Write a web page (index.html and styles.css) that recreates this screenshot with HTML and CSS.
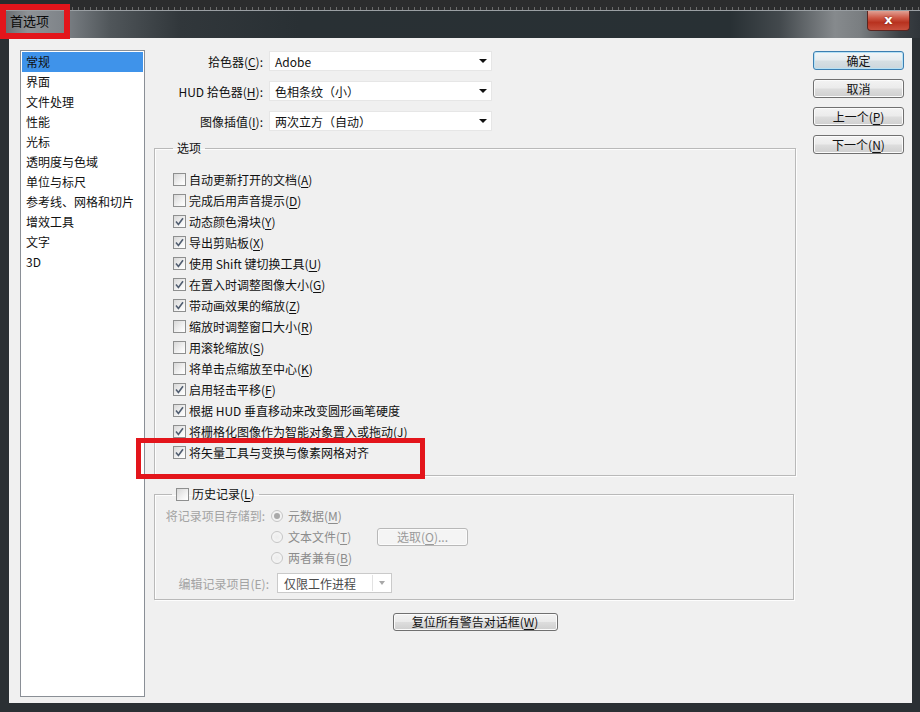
FILE: index.html
```html
<!DOCTYPE html>
<html lang="zh-CN">
<head>
<meta charset="utf-8">
<title>首选项</title>
<link rel="stylesheet" href="styles.css">
</head>
<body>
<div class="ruler"></div>
<div class="window">
  <div class="titlebar">
    <span class="title">首选项</span>
    <span class="close">x</span>
  </div>
  <div class="client">
    <ul class="catlist">
      <li class="sel">常规</li>
      <li>界面</li>
      <li>文件处理</li>
      <li>性能</li>
      <li>光标</li>
      <li>透明度与色域</li>
      <li>单位与标尺</li>
      <li>参考线、网格和切片</li>
      <li>增效工具</li>
      <li>文字</li>
      <li>3D</li>
    </ul>
    <div class="main">
      <div class="field"><label>拾色器(<u>C</u>):</label><div class="select"><span>Adobe</span><i class="arr"></i></div></div>
      <div class="field"><label>HUD 拾色器(<u>H</u>):</label><div class="select"><span>色相条纹（小）</span><i class="arr"></i></div></div>
      <div class="field last"><label>图像插值(<u>I</u>):</label><div class="select"><span>两次立方（自动）</span><i class="arr"></i></div></div>

      <fieldset class="group opts">
        <legend>选项</legend>
        <div class="checks">
          <div class="chk"><span class="box"></span>自动更新打开的文档(<u>A</u>)</div>
          <div class="chk"><span class="box"></span>完成后用声音提示(<u>D</u>)</div>
          <div class="chk"><span class="box on"><svg viewBox="0 0 11 11"><path d="M2 5.6 L4.4 8.4 L9 2.2"/></svg></span>动态颜色滑块(<u>Y</u>)</div>
          <div class="chk"><span class="box on"><svg viewBox="0 0 11 11"><path d="M2 5.6 L4.4 8.4 L9 2.2"/></svg></span>导出剪贴板(<u>X</u>)</div>
          <div class="chk"><span class="box on"><svg viewBox="0 0 11 11"><path d="M2 5.6 L4.4 8.4 L9 2.2"/></svg></span>使用 Shift 键切换工具(<u>U</u>)</div>
          <div class="chk"><span class="box on"><svg viewBox="0 0 11 11"><path d="M2 5.6 L4.4 8.4 L9 2.2"/></svg></span>在置入时调整图像大小(<u>G</u>)</div>
          <div class="chk"><span class="box on"><svg viewBox="0 0 11 11"><path d="M2 5.6 L4.4 8.4 L9 2.2"/></svg></span>带动画效果的缩放(<u>Z</u>)</div>
          <div class="chk"><span class="box"></span>缩放时调整窗口大小(<u>R</u>)</div>
          <div class="chk"><span class="box"></span>用滚轮缩放(<u>S</u>)</div>
          <div class="chk"><span class="box"></span>将单击点缩放至中心(<u>K</u>)</div>
          <div class="chk"><span class="box on"><svg viewBox="0 0 11 11"><path d="M2 5.6 L4.4 8.4 L9 2.2"/></svg></span>启用轻击平移(<u>F</u>)</div>
          <div class="chk"><span class="box on"><svg viewBox="0 0 11 11"><path d="M2 5.6 L4.4 8.4 L9 2.2"/></svg></span>根据 HUD 垂直移动来改变圆形画笔硬度</div>
          <div class="chk"><span class="box on"><svg viewBox="0 0 11 11"><path d="M2 5.6 L4.4 8.4 L9 2.2"/></svg></span>将栅格化图像作为智能对象置入或拖动(<u>J</u>)</div>
          <div class="chk"><span class="box on"><svg viewBox="0 0 11 11"><path d="M2 5.6 L4.4 8.4 L9 2.2"/></svg></span>将矢量工具与变换与像素网格对齐</div>
        </div>
      </fieldset>

      <fieldset class="group hist">
        <legend><span class="box"></span>历史记录(<u>L</u>)</legend>
        <div class="hbody">
          <div class="hrow"><span class="hlabel">将记录项目存储到:</span><span class="radio on"></span><span class="rtext">元数据(<u>M</u>)</span></div>
          <div class="hrow"><span class="hlabel"></span><span class="radio"></span><span class="rtext">文本文件(<u>T</u>)</span><button class="btn dis">选取(<u>O</u>)...</button></div>
          <div class="hrow"><span class="hlabel"></span><span class="radio"></span><span class="rtext">两者兼有(<u>B</u>)</span></div>
          <div class="hrow edit"><span class="hlabel wide">编辑记录项目(E):</span><div class="dsel"><span>仅限工作进程</span><i class="darr"></i></div></div>
        </div>
      </fieldset>

      <div class="resetrow"><button class="btn reset">复位所有警告对话框(<u>W</u>)</button></div>
    </div>
    <div class="side">
      <button class="btn def">确定</button>
      <button class="btn">取消</button>
      <button class="btn">上一个(<u>P</u>)</button>
      <button class="btn">下一个(<u>N</u>)</button>
    </div>
  </div>
</div>
<div class="mark mark-title"></div>
<div class="mark mark-row"></div>
</body>
</html>
```

FILE: styles.css
```css
* { box-sizing: border-box; }
html, body { margin: 0; padding: 0; }
body {
  width: 920px;
  height: 712px;
  overflow: hidden;
  position: relative;
  background: #26292c;
  font-family: "Noto Sans CJK SC", "Noto Sans", sans-serif;
  font-size: 12px;
  color: #111;
}
u { text-decoration: underline; text-underline-offset: 2px; text-decoration-thickness: 1px; }

.ruler {
  height: 10px;
  background:
    repeating-linear-gradient(90deg, #6a6a6a 0 1px, transparent 1px 6px) left bottom / 100% 3px no-repeat,
    #2b2c2d;
}

.window {
  height: 702px;
  display: flex;
  flex-direction: column;
  background: #2b3034;
}

.titlebar {
  height: 28px;
  flex: none;
  display: flex;
  align-items: flex-start;
  justify-content: space-between;
  border-top: 1px solid #9a9fa3;
  background: linear-gradient(90deg, #5f6468 0, #8e9296 28px, #80858a 60px, #50565a 110px, #31373b 180px, #293034 300px, #283034 730px, #43494d 780px, #868a8d 835px, #7a7e81 860px, #3c4145 900px, #30353a 920px);
}
.title {
  padding: 2px 0 0 10px;
  font-size: 13px;
  line-height: 16px;
  color: #0a0a0a;
}
.close {
  width: 43px;
  height: 20px;
  margin: 0 10px 0 0;
  border: 1px solid #5a2520;
  border-top: none;
  border-radius: 0 0 4px 4px;
  background: linear-gradient(#e0a093 0, #cf5a48 35%, #b8321f 60%, #c9503d 100%);
  color: #fff;
  font-family: "DejaVu Sans", sans-serif;
  font-weight: bold;
  font-size: 13px;
  line-height: 17px;
  text-align: center;
  text-shadow: 0 0 2px #6a1a10;
}

.client {
  flex: 1;
  margin: 0 8px 9px 9px;
  background: #f0f0f0;
  display: flex;
  align-items: flex-start;
  padding: 12px 8px 0 11px;
}

.catlist {
  list-style: none;
  margin: 0;
  padding: 1px;
  width: 125px;
  height: 647px;
  flex: none;
  background: #fff;
  border: 1px solid #8a8f96;
}
.catlist li {
  height: 20px;
  line-height: 19px;
  padding-left: 4px;
  color: #111;
  white-space: nowrap;
}
.catlist li.sel { background: #3f93ea; }

.main {
  width: 642px;
  flex: none;
  margin: 0 17px 0 9px;
  padding-top: 1px;
}

.field {
  display: flex;
  align-items: center;
  height: 20px;
  margin-bottom: 10px;
}
.field.last { margin-bottom: 0; }
.field label {
  width: 109px;
  margin-right: 6px;
  text-align: right;
  white-space: nowrap;
}
.select {
  width: 223px;
  height: 20px;
  display: flex;
  align-items: center;
  padding-left: 5px;
  background: #fff;
  border: 1px solid #e6e6e6;
}
.arr {
  margin-left: auto;
  margin-right: 4px;
  width: 0;
  height: 0;
  border-left: 4px solid transparent;
  border-right: 4px solid transparent;
  border-top: 4px solid #111;
}

.group {
  margin: 0;
  padding: 0;
  min-width: 0;
  border: 1px solid #b9b9b9;
  box-shadow: inset 1px 1px 0 #fdfdfd, 1px 1px 0 #fdfdfd;
}
.group legend {
  margin-left: 18px;
  padding: 0 4px;
  height: 16px;
  line-height: 16px;
  display: flex;
  align-items: center;
}
.opts { margin-top: 9px; }
.checks { padding: 13px 0 12px 18px; }
.chk {
  height: 21px;
  display: flex;
  align-items: center;
  white-space: nowrap;
}

.box {
  width: 13px;
  height: 13px;
  flex: none;
  margin-right: 3px;
  border: 1px solid #8e8f8f;
  background: linear-gradient(135deg, #d8d8d8, #f6f6f6 70%, #ffffff);
  display: inline-flex;
  align-items: center;
  justify-content: center;
}
.box svg { width: 11px; height: 11px; }
.box svg path { fill: none; stroke: #505d70; stroke-width: 1.6; }

.hist { margin-top: 10px; width: 640px; }
.hist legend { margin-left: 17px; color: #111; }
.hbody { padding: 3px 0 6px 0; }
.hrow {
  display: flex;
  align-items: center;
  height: 21px;
  white-space: nowrap;
}
.hlabel {
  width: 110px;
  margin-right: 6px;
  text-align: right;
  color: #a3a3a3;
}
.hlabel.wide { width: 114px; margin-right: 8px; }
.radio {
  width: 12px;
  height: 12px;
  flex: none;
  margin-right: 5px;
  border-radius: 50%;
  border: 1px solid #c6c6c6;
  background: radial-gradient(circle, #ececec, #f8f8f8);
  display: inline-flex;
  align-items: center;
  justify-content: center;
}
.radio.on::after {
  content: "";
  width: 6px;
  height: 6px;
  border-radius: 50%;
  background: #a9a9a9;
}
.rtext { width: 89px; color: #8c8c8c; }
.hrow.edit { margin-top: 5px; height: 20px; }
.dsel {
  width: 115px;
  height: 20px;
  display: flex;
  align-items: center;
  padding-left: 6px;
  background: #fff;
  border: 1px solid #cacaca;
  color: #4a4a4a;
}
.darr {
  margin-left: auto;
  width: 19px;
  height: 16px;
  border-left: 1px solid #e2e2e2;
  position: relative;
}
.darr::after {
  content: "";
  position: absolute;
  left: 6px;
  top: 6px;
  border-left: 3px solid transparent;
  border-right: 3px solid transparent;
  border-top: 4px solid #a8a8a8;
}

.btn {
  font-family: inherit;
  font-size: 12px;
  height: 19px;
  padding: 0;
  line-height: 16px;
  color: #111;
  border: 1px solid #707070;
  border-radius: 3px;
  background: linear-gradient(#f3f3f3 0, #ebebeb 48%, #dddddd 52%, #cfcfcf 100%);
  box-shadow: inset 0 0 0 1px #fbfbfb;
}
.btn.dis {
  width: 91px;
  height: 18px;
  color: #9a9a9a;
  border-color: #b8b8b8;
  background: #f4f4f4;
}
.resetrow { display: flex; justify-content: center; margin-top: 13px; }
.btn.reset { width: 165px; height: 18px; }

.side {
  width: 91px;
  flex: none;
  padding-top: 1px;
  display: flex;
  flex-direction: column;
}
.side .btn { width: 91px; margin-bottom: 9px; }
.btn.def {
  border-color: #3c7fb1;
  box-shadow: inset 0 0 0 1px #b6e1f5;
  background: linear-gradient(#f2f6f8 0, #e6ecef 48%, #d6dfe3 52%, #cbd6dc 100%);
}

.mark {
  position: absolute;
  border: 6px solid #e3151b;
}
.mark-title { left: 0; top: 4px; width: 70px; height: 35px; }
.mark-row { left: 136px; top: 438px; width: 289px; height: 41px; border-width: 5px; }
```
